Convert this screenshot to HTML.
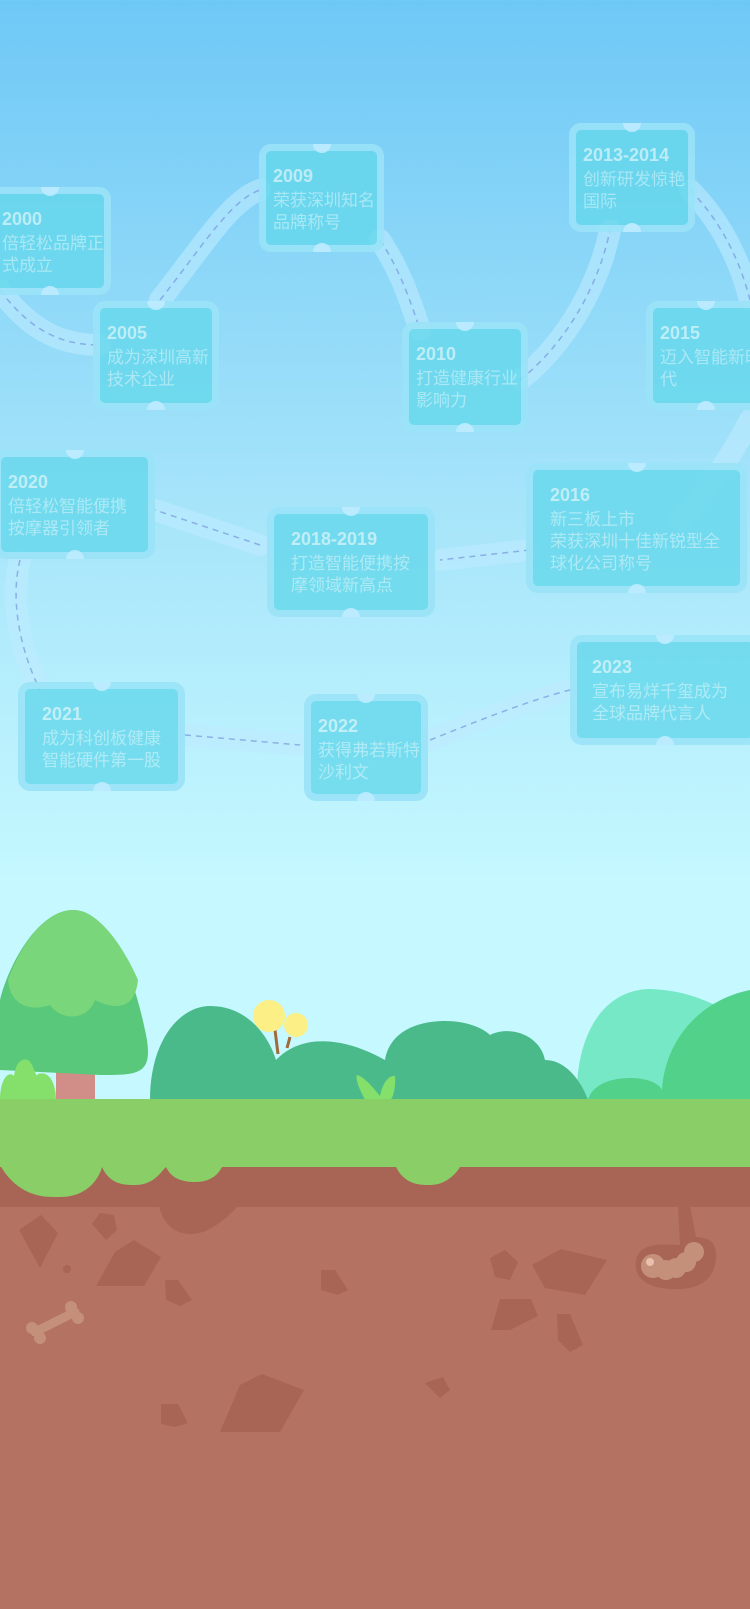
<!DOCTYPE html>
<html><head><meta charset="utf-8"><style>
html,body{margin:0;padding:0}
body{width:750px;height:1609px;position:relative;overflow:hidden;font-family:"Liberation Sans","Noto Sans CJK SC",sans-serif;background:linear-gradient(#6ec8f6 0px,#a6e4fa 500px,#c5f8ff 880px,#c5f8ff 1100px)}
svg{position:absolute;left:0;top:0}
.c{position:absolute;box-sizing:border-box;border:7px solid rgba(190,235,255,.55);border-radius:12px;background:rgba(100,215,235,.8);color:rgba(255,255,255,.42);padding:14px 0 0 7px;font-size:17px;line-height:22px;white-space:nowrap}
.c b{display:block;font-size:18px;color:rgba(255,255,255,.55);margin-bottom:3px}
.c:before,.c:after{content:"";position:absolute;left:50%;width:18px;height:9px;margin-left:-9px;background:rgba(190,235,255,.9);border-radius:0 0 9px 9px;top:-7px}
.c:after{top:auto;bottom:-7px;border-radius:9px 9px 0 0}
</style></head><body>
<svg width="750" height="1609" viewBox="0 0 750 1609">
<g fill="none" stroke="rgba(190,235,255,.6)" stroke-width="22" stroke-linecap="round">
<path d="M0 290 C30 330 60 345 100 345 M160 300 C200 250 230 200 260 190 M380 240 C400 270 410 300 420 330 M520 380 C570 340 600 280 610 230 M690 190 C720 220 740 260 750 300 M750 420 C730 460 700 500 680 520 M530 550 L440 560 M260 545 L155 510 M20 560 C10 600 20 650 40 690 M185 735 L300 745 M430 740 C480 720 530 700 570 690"/>
</g>
<g fill="none" stroke="rgba(120,150,220,.7)" stroke-width="1.5" stroke-dasharray="6 5">
<path d="M0 290 C30 330 60 345 100 345 M160 300 C200 250 230 200 260 190 M380 240 C400 270 410 300 420 330 M520 380 C570 340 600 280 610 230 M690 190 C720 220 740 260 750 300 M530 550 L440 560 M260 545 L155 510 M20 560 C10 600 20 650 40 690 M185 735 L300 745 M430 740 C480 720 530 700 570 690"/>
</g>
<path d="M577 1100 C575 1040 600 990 650 989 C680 990 700 998 715 1005 C735 995 750 1000 750 1000 L750 1100Z" fill="#76e8c5"/>
<path d="M150 1100 C150 1040 180 1006 210 1006 C250 1006 270 1040 276 1060 C300 1035 340 1035 385 1060 C390 1030 420 1021 445 1021 C470 1021 485 1030 490 1035 C510 1025 540 1035 545 1060 C570 1060 585 1090 588 1100Z" fill="#4aba8a"/>
<path d="M588 1100 C592 1085 610 1078 630 1078 C650 1078 660 1085 662 1090 C665 1040 700 1000 750 990 L750 1100Z" fill="#52d18a"/>
<rect x="56" y="1070" width="39" height="30" fill="#d18d88"/>
<path d="M0 1070 L0 1000 C10 960 40 910 73 910 C105 910 130 960 145 1030 C155 1075 140 1075 100 1075 Z" fill="#5ac87a"/>
<path d="M8 980 C25 935 50 910 73 910 C100 910 125 950 138 980 C135 1010 115 1010 95 1000 C88 1020 62 1022 50 1005 C30 1012 10 1005 8 980Z" fill="#7ad67a"/>
<path d="M0 1100 C0 1080 8 1070 14 1076 C16 1062 22 1058 28 1060 C34 1064 36 1080 38 1074 C50 1070 56 1085 56 1100Z" fill="#84e06a"/>
<path d="M365 1100 C360 1090 355 1080 357 1075 C365 1077 375 1090 380 1096 C382 1085 388 1075 395 1076 C396 1090 392 1100 390 1100Z" fill="#84e06a"/>
<path d="M275 1030 L278 1054 M290 1037 L287 1048" stroke="#a06a3a" stroke-width="3"/>
<ellipse cx="269" cy="1016" rx="16" ry="16" fill="#fbef85"/>
<ellipse cx="296" cy="1025" rx="12" ry="12" fill="#fbef85"/>
<rect x="0" y="1205" width="750" height="404" fill="#b37262"/>
<rect x="0" y="1165" width="750" height="42" fill="#a86556"/>
<rect x="0" y="1099" width="750" height="68" fill="#8ace67"/>
<path d="M0 1165 C20 1200 50 1197 60 1197 C90 1197 100 1175 102 1167 C110 1185 125 1185 135 1185 C155 1185 162 1170 166 1167 C172 1180 185 1182 195 1182 C215 1182 220 1170 222 1167Z M396 1167 C405 1185 420 1185 430 1185 C445 1185 455 1175 460 1167Z" fill="#8ace67"/>
<path d="M159 1206 C165 1230 180 1234 192 1234 C210 1234 230 1215 238 1206Z" fill="#a86556"/>
<g fill="#a86556">
<path d="M19 1230 L41 1215 L58 1233 L40 1268Z"/><path d="M92 1224 L100 1213 L114 1215 L117 1230 L106 1240Z"/>
<path d="M96 1286 L115 1252 L134 1240 L161 1257 L144 1286Z"/><path d="M165 1280 L178 1280 L192 1300 L180 1306 L166 1300Z"/>
<path d="M321 1270 L335 1270 L348 1290 L338 1295 L321 1290Z"/><path d="M490 1258 L505 1250 L518 1262 L510 1280 L495 1277Z"/>
<path d="M532 1265 L561 1249 L607 1260 L585 1295 L545 1288Z"/><path d="M491 1330 L500 1299 L531 1299 L538 1316 L510 1330Z"/>
<path d="M557 1314 L570 1314 L583 1345 L570 1352 L558 1340Z"/><path d="M161 1404 L178 1404 L188 1423 L175 1427 L161 1424Z"/>
<path d="M220 1432 L240 1385 L262 1374 L304 1390 L280 1432Z"/><path d="M425 1383 L443 1377 L450 1390 L440 1398Z"/>
<circle cx="67" cy="1269" r="4"/>
<path d="M678 1206 L680 1245 C670 1245 640 1240 636 1260 C632 1285 660 1290 680 1289 C705 1288 716 1275 716 1255 C716 1238 704 1238 696 1237 L690 1206Z"/>
</g>
<g fill="#c59079"><circle cx="694" cy="1252" r="10"/><circle cx="686" cy="1262" r="10"/><circle cx="676" cy="1268" r="10"/><circle cx="666" cy="1270" r="10"/><circle cx="653" cy="1266" r="12"/></g>
<circle cx="650" cy="1262" r="4" fill="#e8c0ad"/>
<path d="M35 1332 L75 1312" stroke="#c59079" stroke-width="9" stroke-linecap="round"/>
<circle cx="32" cy="1328" r="6" fill="#c59079"/><circle cx="40" cy="1338" r="6" fill="#c59079"/><circle cx="71" cy="1307" r="6" fill="#c59079"/><circle cx="78" cy="1318" r="6" fill="#c59079"/>
</svg>
<div class="c" style="left:-12px;top:187px;width:123px;height:108px"><b>2000</b>倍轻松品牌正<br>式成立</div>
<div class="c" style="left:259px;top:144px;width:125px;height:108px"><b>2009</b>荣获深圳知名<br>品牌称号</div>
<div class="c" style="left:569px;top:123px;width:126px;height:109px"><b>2013-2014</b>创新研发惊艳<br>国际</div>
<div class="c" style="left:93px;top:301px;width:126px;height:109px"><b>2005</b>成为深圳高新<br>技术企业</div>
<div class="c" style="left:402px;top:322px;width:126px;height:110px"><b>2010</b>打造健康行业<br>影响力</div>
<div class="c" style="left:646px;top:301px;width:120px;height:109px"><b>2015</b>迈入智能新时<br>代</div>
<div class="c" style="left:-6px;top:450px;width:161px;height:109px"><b>2020</b>倍轻松智能便携<br>按摩器引领者</div>
<div class="c" style="left:267px;top:507px;width:168px;height:110px;padding-left:17px"><b>2018-2019</b>打造智能便携按<br>摩领域新高点</div>
<div class="c" style="left:526px;top:463px;width:221px;height:130px;padding-left:17px"><b>2016</b>新三板上市<br>荣获深圳十佳新锐型全<br>球化公司称号</div>
<div class="c" style="left:18px;top:682px;width:167px;height:109px;padding-left:17px"><b>2021</b>成为科创板健康<br>智能硬件第一股</div>
<div class="c" style="left:304px;top:694px;width:124px;height:107px"><b>2022</b>获得弗若斯特<br>沙利文</div>
<div class="c" style="left:570px;top:635px;width:190px;height:110px;padding-left:15px"><b>2023</b>宣布易烊千玺成为<br>全球品牌代言人</div>
</body></html>
